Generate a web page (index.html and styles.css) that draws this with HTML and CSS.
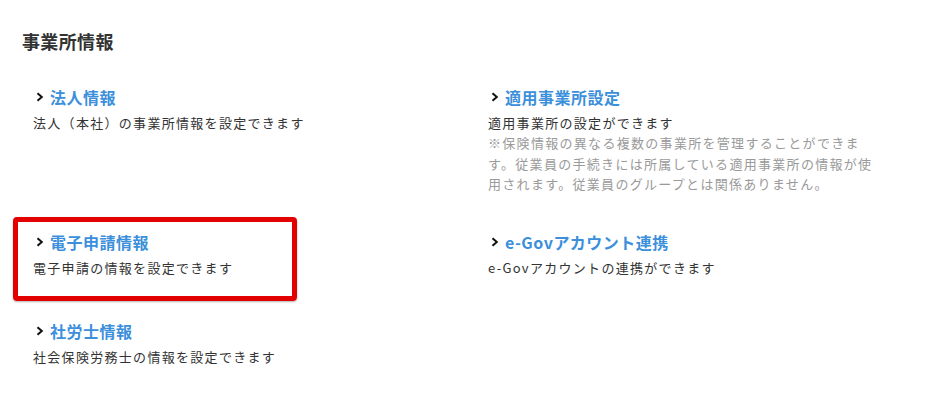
FILE: index.html
```html
<!DOCTYPE html>
<html lang="ja">
<head>
    <meta charset="UTF-8">
    <meta name="viewport" content="width=device-width, initial-scale=1.0">
    <title>事業所情報</title>
    <link rel="stylesheet" href="styles.css">
</head>
<body>
    <div class="page">
        <h2 class="page-title">事業所情報</h2>

        <div class="menu">
            <div class="item">
                <a class="item-link" href="#">
                    <svg class="chevron" width="8" height="10" viewBox="0 0 8 10"><path d="M1.5 1.2 L5.8 5 L1.5 8.8" /></svg>
                    法人情報
                </a>
                <p class="item-desc">法人（本社）の事業所情報を設定できます</p>
            </div>

            <div class="item">
                <a class="item-link" href="#">
                    <svg class="chevron" width="8" height="10" viewBox="0 0 8 10"><path d="M1.5 1.2 L5.8 5 L1.5 8.8" /></svg>
                    適用事業所設定
                </a>
                <p class="item-desc">適用事業所の設定ができます</p>
                <p class="item-note">※保険情報の異なる複数の事業所を管理することができます。従業員の手続きには所属している適用事業所の情報が使用されます。従業員のグループとは関係ありません。</p>
            </div>

            <div class="item marked">
                <a class="item-link" href="#">
                    <svg class="chevron" width="8" height="10" viewBox="0 0 8 10"><path d="M1.5 1.2 L5.8 5 L1.5 8.8" /></svg>
                    電子申請情報
                </a>
                <p class="item-desc">電子申請の情報を設定できます</p>
            </div>

            <div class="item">
                <a class="item-link" href="#">
                    <svg class="chevron" width="8" height="10" viewBox="0 0 8 10"><path d="M1.5 1.2 L5.8 5 L1.5 8.8" /></svg>
                    e-Govアカウント連携
                </a>
                <p class="item-desc">e-Govアカウントの連携ができます</p>
            </div>

            <div class="item">
                <a class="item-link" href="#">
                    <svg class="chevron" width="8" height="10" viewBox="0 0 8 10"><path d="M1.5 1.2 L5.8 5 L1.5 8.8" /></svg>
                    社労士情報
                </a>
                <p class="item-desc">社会保険労務士の情報を設定できます</p>
            </div>
        </div>
    </div>
</body>
</html>
```

FILE: styles.css
```css
body {
    margin: 0;
    background-color: #fff;
    color: #333;
    font-family: "Noto Sans CJK JP", "Noto Sans", sans-serif;
}

.page {
    padding: 28px 22px 0;
}

.page-title {
    margin: 0;
    font-size: 18px;
    font-weight: 700;
    line-height: 27px;
    letter-spacing: 0.02em;
    color: #333;
}

.menu {
    display: grid;
    grid-template-columns: 455px 1fr;
    row-gap: 41px;
    margin-top: 30px;
    padding-left: 11px;
}

.item {
    display: flex;
    flex-direction: column;
}

.item-link {
    display: flex;
    align-items: center;
    gap: 6px;
    padding-left: 3px;
    font-size: 16px;
    font-weight: 700;
    line-height: 24px;
    letter-spacing: 0.03em;
    color: #3b8fdb;
    text-decoration: none;
}

.chevron {
    flex: none;
    fill: none;
    stroke: #111;
    stroke-width: 2;
}

.item-desc,
.item-note {
    margin: 0;
    font-size: 13px;
    line-height: 20.3px;
    letter-spacing: 0.1em;
    max-width: 390px;
}

.item-desc {
    margin-top: 4px;
    color: #333;
}

.item-note {
    margin-bottom: -5px;
    color: #9a9a9a;
}

.marked {
    position: relative;
}

.marked::after {
    content: "";
    position: absolute;
    left: -20px;
    top: -13px;
    width: 284px;
    height: 84px;
    box-sizing: border-box;
    border: 5px solid #e30000;
    border-radius: 4px;
    box-shadow: 0 1px 2px rgba(0, 0, 0, 0.3);
}
```
